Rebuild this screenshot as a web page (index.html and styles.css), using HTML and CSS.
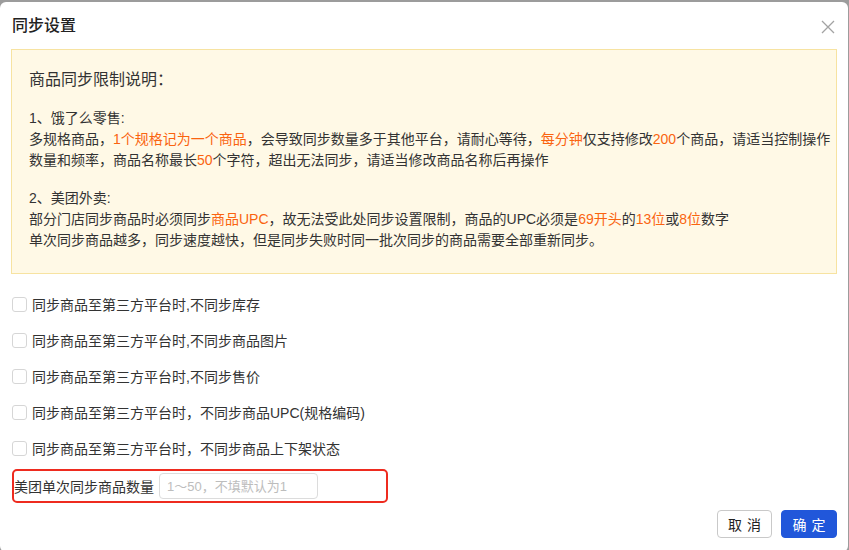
FILE: index.html
```html
<!DOCTYPE html>
<html lang="zh-CN">
<head>
<meta charset="UTF-8">
<meta name="viewport" content="width=device-width, initial-scale=1.0">
<title>同步设置</title>
<link rel="stylesheet" href="styles.css">
</head>
<body>
  <div class="dialog">
    <div class="dialog-header">
      <span class="dialog-title">同步设置</span>
      <span class="close-btn">
        <svg width="14" height="14" viewBox="0 0 14 14"><path d="M1 1L13 13M13 1L1 13" stroke="#a3a3a3" stroke-width="1.3" fill="none"/></svg>
      </span>
    </div>
    <div class="dialog-body">
      <div class="notice">
        <div class="notice-title">商品同步限制说明：</div>
        <p>1、饿了么零售:<br>多规格商品，<em>1个规格记为一个商品</em>，会导致同步数量多于其他平台，请耐心等待，<em>每分钟</em>仅支持修改<em>200</em>个商品，请适当控制操作<br>数量和频率，商品名称最长<em>50</em>个字符，超出无法同步，请适当修改商品名称后再操作</p>
        <p>2、美团外卖:<br>部分门店同步商品时必须同步<em>商品UPC</em>，故无法受此处同步设置限制，商品的UPC必须是<em>69开头</em>的<em>13位</em>或<em>8位</em>数字<br>单次同步商品越多，同步速度越快，但是同步失败时同一批次同步的商品需要全部重新同步。</p>
      </div>
      <div class="options">
        <label class="option"><span class="checkbox"></span>同步商品至第三方平台时,不同步库存</label>
        <label class="option"><span class="checkbox"></span>同步商品至第三方平台时,不同步商品图片</label>
        <label class="option"><span class="checkbox"></span>同步商品至第三方平台时,不同步售价</label>
        <label class="option"><span class="checkbox"></span>同步商品至第三方平台时，不同步商品UPC(规格编码)</label>
        <label class="option"><span class="checkbox"></span>同步商品至第三方平台时，不同步商品上下架状态</label>
      </div>
      <div class="count-row">
        <span class="count-label">美团单次同步商品数量</span>
        <input class="count-input" type="text" placeholder="1～50，不填默认为1">
      </div>
    </div>
    <div class="dialog-footer">
      <button class="btn">取消</button>
      <button class="btn btn-primary">确定</button>
    </div>
  </div>
</body>
</html>
```

FILE: styles.css
```css
html, body {
  height: 100%;
}
body {
  margin: 0;
  padding-top: 2px;
  box-sizing: border-box;
  background-color: #9c9c9c;
  font-family: "Liberation Sans", "Noto Sans CJK SC", sans-serif;
  color: #333;
  overflow: hidden;
}
.dialog {
  width: 848px;
  height: 550px;
  background-color: #fff;
  border-radius: 6px;
  display: flex;
  flex-direction: column;
}
.dialog > div {
  flex-shrink: 0;
}
.dialog-header {
  height: 47px;
  display: flex;
  align-items: center;
  justify-content: space-between;
  padding: 0 13px 0 12px;
  box-sizing: border-box;
}
.dialog-title {
  font-size: 16px;
  line-height: 24px;
  font-weight: 500;
  color: #222;
}
.close-btn {
  display: flex;
  padding-top: 2px;
}
.dialog-body {
  padding: 0 11px 0 11px;
}
.notice {
  background-color: #fff9e6;
  border: 1px solid #f7e3a1;
  padding: 18px 4px 22px 17px;
  font-size: 14px;
  white-space: nowrap;
}
.notice-title {
  font-size: 16px;
  line-height: 24px;
  margin-bottom: 16px;
}
.notice p {
  margin: 0;
  line-height: 21px;
}
.notice p + p {
  margin-top: 17px;
}
.notice em {
  font-style: normal;
  color: #fa6410;
}
.options {
  margin-top: 12px;
}
.option {
  display: flex;
  align-items: center;
  height: 36px;
  font-size: 14px;
}
.checkbox {
  width: 13px;
  height: 13px;
  border: 1px solid #d6d6d6;
  border-radius: 3px;
  margin: 0 5px 0 1px;
  flex-shrink: 0;
}
.count-row {
  margin-top: 3px;
  width: 376px;
  height: 34px;
  border: 2px solid #ee2b1f;
  border-radius: 5px;
  box-sizing: border-box;
  display: flex;
  align-items: center;
  margin-left: 1px;
}
.count-label {
  font-size: 14px;
  margin-right: 5px;
}
.count-input {
  width: 159px;
  height: 26px;
  box-sizing: border-box;
  border: 1px solid #dcdcdc;
  border-radius: 4px;
  padding: 0 7px;
  font-size: 13px;
  font-family: inherit;
  outline: none;
}
.count-input::placeholder {
  color: #bdbdbd;
}
.dialog-footer {
  display: flex;
  justify-content: flex-end;
  gap: 9px;
  padding: 7px 11px 0 0;
}
.btn {
  width: 55px;
  height: 28px;
  border: 1px solid #c9c9c9;
  border-radius: 4px;
  background-color: #fff;
  color: #222;
  font-size: 14px;
  font-family: inherit;
  letter-spacing: 5px;
  text-indent: 5px;
  padding: 0;
  cursor: pointer;
}
.btn-primary {
  width: 56px;
  background-color: #2157da;
  border-color: #2157da;
  color: #fff;
}
```
